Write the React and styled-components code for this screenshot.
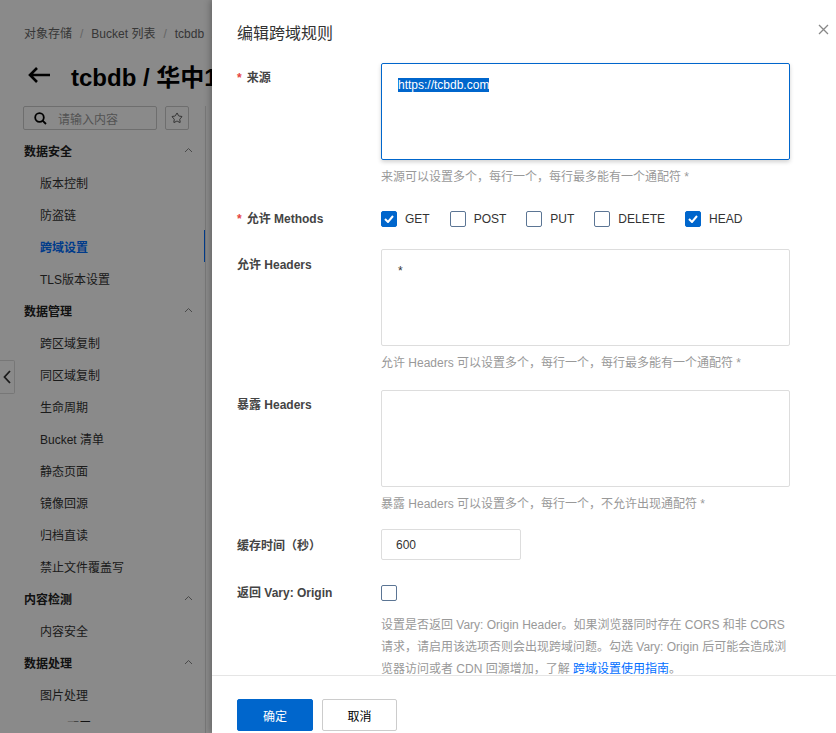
import React from "react";
import styled, { createGlobalStyle } from "styled-components";
import { Star } from "lucide-react";

const GlobalStyle = createGlobalStyle`
  html, body {
    margin: 0;
    padding: 0;
  }
  body {
    font-family: "Liberation Sans", "Noto Sans CJK SC", sans-serif;
    font-size: 12px;
    color: #333;
    background: #fff;
  }
  * {
    box-sizing: border-box;
  }
`;

const menu = [
  { group: "数据安全", items: ["版本控制", "防盗链", "跨域设置", "TLS版本设置"] },
  {
    group: "数据管理",
    items: [
      "跨区域复制",
      "同区域复制",
      "生命周期",
      "Bucket 清单",
      "静态页面",
      "镜像回源",
      "归档直读",
      "禁止文件覆盖写",
    ],
  },
  { group: "内容检测", items: ["内容安全"] },
  { group: "数据处理", items: ["图片处理"] },
  { group: "Bucket 配置", items: [] },
];

const methods = [
  { name: "GET", checked: true },
  { name: "POST", checked: false },
  { name: "PUT", checked: false },
  { name: "DELETE", checked: false },
  { name: "HEAD", checked: true },
];

const ChevronUp = () => (
  <svg width="9" height="6" viewBox="0 0 9 6">
    <polyline points="1,5 4.5,1.5 8,5" fill="none" stroke="#888" strokeWidth="1" />
  </svg>
);

const CheckMark = () => (
  <svg width="10" height="8" viewBox="0 0 10 8">
    <polyline points="1,4 4,7 9,1" fill="none" stroke="#fff" strokeWidth="2" />
  </svg>
);

const Checkbox = ({ checked }) => (
  <Box checked={checked}>{checked && <CheckMark />}</Box>
);

const App = () => {
  return (
    <Shell>
      <GlobalStyle />
      <Console>
        <Breadcrumb>
          <Crumb>对象存储</Crumb>
          <Sep>/</Sep>
          <Crumb>Bucket 列表</Crumb>
          <Sep>/</Sep>
          <Crumb>tcbdb</Crumb>
          <Sep>/</Sep>
          <Crumb>跨域设置</Crumb>
        </Breadcrumb>
        <TitleRow>
          <svg width="24" height="18" viewBox="0 0 24 18">
            <path
              d="M23 9H3M10 2L3 9l7 7"
              fill="none"
              stroke="#000"
              strokeWidth="2.6"
            />
          </svg>
          <PageTitle>tcbdb / 华中1（武汉）</PageTitle>
        </TitleRow>
        <Sidebar>
          <SearchRow>
            <SearchBox>
              <svg width="13" height="13" viewBox="0 0 13 13">
                <circle cx="5.5" cy="5.5" r="4.3" fill="none" stroke="#000" strokeWidth="1.8" />
                <path d="M8.6 8.6L12 12" stroke="#000" strokeWidth="1.8" />
              </svg>
              <Placeholder>请输入内容</Placeholder>
            </SearchBox>
            <StarButton>
              <Star size={12} strokeWidth={1.6} color="#333" />
            </StarButton>
          </SearchRow>
          <MenuScroll>
            {menu.map((section) => (
              <React.Fragment key={section.group}>
                <GroupRow>
                  {section.group}
                  <ChevronUp />
                </GroupRow>
                {section.items.map((item) => (
                  <ItemRow key={item} active={item === "跨域设置"}>
                    {item}
                  </ItemRow>
                ))}
              </React.Fragment>
            ))}
          </MenuScroll>
        </Sidebar>
      </Console>
      <CollapseTab>
        <svg width="8" height="14" viewBox="0 0 8 14">
          <polyline points="7,1 1.5,7 7,13" fill="none" stroke="#333" strokeWidth="1.8" />
        </svg>
      </CollapseTab>

      <Overlay />

      <Drawer>
        <DrawerHeader>
          <DrawerTitle>编辑跨域规则</DrawerTitle>
          <CloseButton>
            <svg width="11" height="11" viewBox="0 0 11 11">
              <path d="M1 1l9 9M10 1l-9 9" stroke="#888" strokeWidth="1.3" />
            </svg>
          </CloseButton>
        </DrawerHeader>

        <DrawerBody>
          <FormItem space={19}>
            <Label pt={6}>
              <Required>*</Required>来源
            </Label>
            <Control>
              <TextBox height={97} focused>
                <Selected>https://tcbdb.com</Selected>
              </TextBox>
              <Help>来源可以设置多个，每行一个，每行最多能有一个通配符 *</Help>
            </Control>
          </FormItem>

          <FormItem space={20}>
            <Label pt={4}>
              <Required>*</Required>允许 Methods
            </Label>
            <CheckGroup>
              {methods.map((m) => (
                <CheckItem key={m.name}>
                  <Checkbox checked={m.checked} />
                  {m.name}
                </CheckItem>
              ))}
            </CheckGroup>
          </FormItem>

          <FormItem space={17}>
            <Label pt={7}>允许 Headers</Label>
            <Control>
              <TextBox height={97}>*</TextBox>
              <Help>允许 Headers 可以设置多个，每行一个，每行最多能有一个通配符 *</Help>
            </Control>
          </FormItem>

          <FormItem space={18}>
            <Label pt={6}>暴露 Headers</Label>
            <Control>
              <TextBox height={97}></TextBox>
              <Help>暴露 Headers 可以设置多个，每行一个，不允许出现通配符 *</Help>
            </Control>
          </FormItem>

          <FormItem space={16}>
            <Label pt={8}>缓存时间（秒）</Label>
            <Control>
              <NumberInput>600</NumberInput>
            </Control>
          </FormItem>

          <FormItem space={20}>
            <Label pt={4}>返回 Vary: Origin</Label>
            <Control>
              <CheckGroup>
                <Checkbox checked={false} />
              </CheckGroup>
              <LongHelp>
                设置是否返回 Vary: Origin Header。如果浏览器同时存在 CORS 和非 CORS
                <br />
                请求，请启用该选项否则会出现跨域问题。勾选 Vary: Origin 后可能会造成浏
                <br />
                览器访问或者 CDN 回源增加，了解 <Link>跨域设置使用指南</Link>。
              </LongHelp>
            </Control>
          </FormItem>
        </DrawerBody>

        <DrawerFooter>
          <Button primary>确定</Button>
          <Button>取消</Button>
        </DrawerFooter>
      </Drawer>
    </Shell>
  );
};

const Shell = styled.div`
  position: relative;
  width: 836px;
  height: 733px;
  overflow: hidden;
  background: #fff;
`;

const Console = styled.div`
  padding: 25px 0 0 23px;
`;

const Breadcrumb = styled.div`
  display: flex;
  align-items: center;
  height: 18px;
  line-height: 18px;
  padding-left: 1px;
  white-space: nowrap;
`;

const Crumb = styled.span`
  color: #666;
`;

const Sep = styled.span`
  color: #bbb;
  margin: 0 8px;
`;

const TitleRow = styled.div`
  display: flex;
  align-items: center;
  height: 32px;
  margin-top: 16px;
  padding-left: 4px;
  white-space: nowrap;
  svg {
    flex-shrink: 0;
  }
`;

const PageTitle = styled.h2`
  margin: 0 0 0 20px;
  font-size: 24px;
  font-weight: bold;
  color: #000;
`;

const Sidebar = styled.div`
  width: 183px;
  margin-top: 15px;
  border-right: 1px solid #ddd;
  height: 700px;
`;

const SearchRow = styled.div`
  display: flex;
  gap: 8px;
  margin-bottom: 4px;
`;

const MenuScroll = styled.div`
  height: 588px;
  overflow: hidden;
`;

const SearchBox = styled.div`
  width: 134px;
  height: 24px;
  border: 1px solid #ccc;
  border-radius: 2px;
  display: flex;
  align-items: center;
  padding-left: 10px;
  gap: 11px;
`;

const Placeholder = styled.span`
  color: #999;
`;

const StarButton = styled.div`
  width: 24px;
  height: 24px;
  border: 1px solid #ccc;
  border-radius: 2px;
  display: flex;
  align-items: center;
  justify-content: center;
`;

const GroupRow = styled.div`
  height: 32px;
  display: flex;
  align-items: center;
  justify-content: space-between;
  padding: 0 12px 0 1px;
  font-weight: bold;
  color: #222;
`;

const ItemRow = styled.div`
  height: 32px;
  display: flex;
  align-items: center;
  padding-left: 17px;
  margin-right: -1px;
  color: ${({ active }) => (active ? "#006eff" : "#333")};
  font-weight: ${({ active }) => (active ? "bold" : "normal")};
  border-right: 2px solid ${({ active }) => (active ? "#006eff" : "transparent")};
`;

const CollapseTab = styled.div`
  position: absolute;
  left: 0;
  top: 360px;
  width: 15px;
  height: 34px;
  background: #fff;
  border: 1px solid #ddd;
  border-left: none;
  border-radius: 0 2px 2px 0;
  display: flex;
  align-items: center;
  justify-content: center;
`;

const Overlay = styled.div`
  position: absolute;
  inset: 0;
  background: rgba(0, 0, 0, 0.46);
`;

const Drawer = styled.div`
  position: absolute;
  top: 0;
  bottom: 0;
  left: 212px;
  right: 0;
  background: #fff;
  box-shadow: -2px 0 6px rgba(0, 0, 0, 0.25);
  display: flex;
  flex-direction: column;
`;

const DrawerHeader = styled.div`
  position: relative;
  padding: 24px 25px 0;
  flex-shrink: 0;
`;

const DrawerTitle = styled.h3`
  margin: 0;
  font-size: 16px;
  line-height: 20px;
  font-weight: normal;
  color: #333;
`;

const CloseButton = styled.div`
  position: absolute;
  top: 23px;
  right: 7px;
  width: 12px;
  height: 12px;
  display: flex;
  align-items: center;
  justify-content: center;
`;

const DrawerBody = styled.div`
  flex: 1;
  overflow: hidden;
  padding: 0 25px;
`;

const FormItem = styled.div`
  display: grid;
  grid-template-columns: 144px 409px;
  margin-top: ${({ space }) => space}px;
`;

const Label = styled.div`
  padding-top: ${({ pt }) => pt}px;
  line-height: 18px;
  font-weight: bold;
  color: #444;
  white-space: nowrap;
`;

const Required = styled.span`
  color: #e54545;
  margin-right: 5px;
`;

const Control = styled.div`
  display: flex;
  flex-direction: column;
`;

const TextBox = styled.div`
  width: 409px;
  height: ${({ height }) => height}px;
  border: 1px solid ${({ focused }) => (focused ? "#0066cc" : "#ddd")};
  box-shadow: ${({ focused }) =>
    focused ? "0 2px 4px rgba(0, 0, 0, 0.18)" : "none"};
  border-radius: 2px;
  padding: 12px 16px;
  line-height: 18px;
  color: #333;
`;

const Selected = styled.span`
  background: #0066cc;
  color: #fff;
`;

const Help = styled.div`
  margin-top: 8px;
  line-height: 18px;
  color: #999;
`;

const LongHelp = styled.div`
  margin-top: 8px;
  line-height: 22px;
  color: #999;
  white-space: nowrap;
`;

const Link = styled.a`
  color: #006eff;
  text-decoration: none;
`;

const CheckGroup = styled.div`
  height: 26px;
  display: flex;
  align-items: center;
  gap: 20px;
`;

const CheckItem = styled.label`
  display: flex;
  align-items: center;
  gap: 8px;
  color: #333;
`;

const Box = styled.span`
  width: 16px;
  height: 16px;
  border-radius: 2px;
  border: 1px solid ${({ checked }) => (checked ? "#0066cc" : "#5b7594")};
  background: ${({ checked }) => (checked ? "#0066cc" : "#fff")};
  display: flex;
  align-items: center;
  justify-content: center;
  flex-shrink: 0;
`;

const NumberInput = styled.div`
  width: 140px;
  height: 31px;
  border: 1px solid #ddd;
  border-radius: 2px;
  padding-left: 14px;
  display: flex;
  align-items: center;
  color: #333;
`;

const DrawerFooter = styled.div`
  flex-shrink: 0;
  height: 58px;
  border-top: 1px solid #e5e5e5;
  padding: 23px 25px 0;
  display: flex;
  gap: 9px;
`;

const Button = styled.button`
  width: ${({ primary }) => (primary ? "76px" : "75px")};
  height: 32px;
  border-radius: 2px;
  border: 1px solid ${({ primary }) => (primary ? "#0066cc" : "#ccc")};
  background: ${({ primary }) => (primary ? "#0066cc" : "#fff")};
  color: ${({ primary }) => (primary ? "#fff" : "#000")};
  font-family: inherit;
  font-size: 12px;
  padding: 0;
  cursor: pointer;
`;

export default App;
